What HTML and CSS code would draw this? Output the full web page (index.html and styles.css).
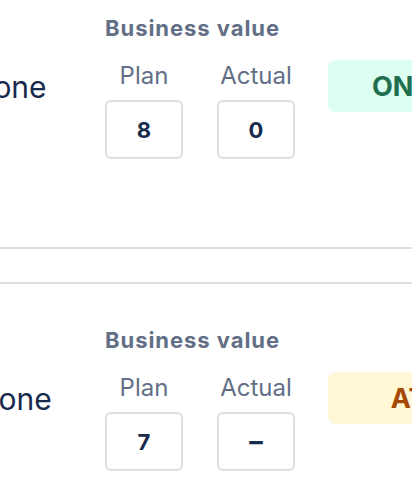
FILE: index.html
```html
<!DOCTYPE html>
<html lang="en">
<head>
<meta charset="utf-8">
<link rel="stylesheet" href="styles.css">
</head>
<body>
<div class="list">
  <div class="row">
    <div class="title">Stage one</div>
    <div class="bv">
      <div class="bv-head">Business value</div>
      <div class="bv-cols">
        <div class="bv-col">
          <div class="bv-label">Plan</div>
          <div class="bv-box">8</div>
        </div>
        <div class="bv-col">
          <div class="bv-label">Actual</div>
          <div class="bv-box">0</div>
        </div>
      </div>
    </div>
    <div class="badge badge-on">ON TRACK</div>
  </div>
  <div class="row">
    <div class="title">Phase one</div>
    <div class="bv">
      <div class="bv-head">Business value</div>
      <div class="bv-cols">
        <div class="bv-col">
          <div class="bv-label">Plan</div>
          <div class="bv-box">7</div>
        </div>
        <div class="bv-col">
          <div class="bv-label">Actual</div>
          <div class="bv-box bv-empty">–</div>
        </div>
      </div>
    </div>
    <div class="badge badge-risk">AT RISK</div>
  </div>
</div>
</body>
</html>
```
FILE: styles.css
```css
html, body {
  margin: 0;
  padding: 0;
  background: #ffffff;
  overflow: hidden;
}
body {
  font-family: Inter, "Noto Sans", sans-serif;
  color: #172b4d;
  width: 412px;
  height: 498px;
}
.list {
  margin-top: -30px;
  margin-left: -97px;
  display: flex;
  flex-direction: column;
  gap: 33px;
}
.row {
  display: flex;
  align-items: center;
  border-top: 2px solid #dcdfe4;
  border-bottom: 2px solid #dcdfe4;
  padding: 44px 0 88px;
  width: 760px;
}
.title {
  flex: 0 0 162px;
  font-size: 30px;
  white-space: nowrap;
  margin-right: 40px;
  margin-top: -2px;
  color: #172b4d;
}
.bv {
  display: flex;
  flex-direction: column;
}
.bv-head {
  font-size: 22px;
  font-weight: 700;
  color: #626f86;
  line-height: 25px;
  letter-spacing: 0.95px;
  white-space: nowrap;
}
.bv-cols {
  display: flex;
  gap: 34px;
  margin-top: 20px;
}
.bv-col {
  display: flex;
  flex-direction: column;
  align-items: center;
  gap: 9px;
}
.bv-label {
  font-size: 24px;
  color: #626f86;
  line-height: 30px;
}
.bv-box {
  width: 78px;
  height: 59px;
  box-sizing: border-box;
  border: 2px solid #dcdfe4;
  border-radius: 6px;
  display: flex;
  align-items: center;
  justify-content: center;
  font-size: 22px;
  font-weight: 700;
  color: #172b4d;
}
.bv-empty {
  font-size: 27px;
}
.badge {
  flex: 0 0 230px;
  align-self: flex-start;
  margin-top: 44px;
  margin-left: 33px;
  height: 52px;
  border-radius: 8px;
  display: flex;
  align-items: center;
  justify-content: center;
  font-size: 27px;
  font-weight: 700;
  white-space: nowrap;
}
.badge-on {
  background: #dcfff1;
  color: #216e4e;
}
.badge-risk {
  background: #fff7d6;
  color: #a54800;
}
```
